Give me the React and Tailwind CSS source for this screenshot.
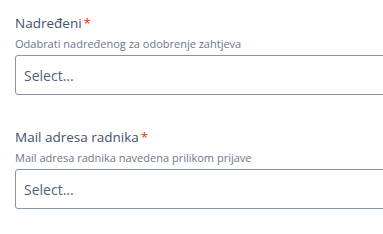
export default function App() {
  const fields = [
    { label: "Nadređeni", hint: "Odabrati nadređenog za odobrenje zahtjeva" },
    { label: "Mail adresa radnika", hint: "Mail adresa radnika navedena prilikom prijave" },
  ]

  return (
    <div className="h-[234px] w-[383px] overflow-hidden bg-white pl-[15px] pt-[14px]" style={{ fontFamily: '"Open Sans", "Noto Sans", sans-serif' }}>
      <div className="flex flex-col gap-[33px]">
        {fields.map((f) => (
          <div key={f.label} className="flex flex-col">
            <label className="text-[13.5px] leading-[18px] text-[#42526e]">
              {f.label}
              <span className="ml-[2px] text-[#de350b]">*</span>
            </label>
            <p className="mt-[5px] text-[11px] leading-[14px] text-[#6b778c]">{f.hint}</p>
            <div className="mt-[4px] flex h-[40px] w-[420px] items-center rounded-[3px] border border-[#8993a4] px-[8px]">
              <span className="text-[14px] text-[#505f79]">Select...</span>
            </div>
          </div>
        ))}
      </div>
    </div>
  )
}
